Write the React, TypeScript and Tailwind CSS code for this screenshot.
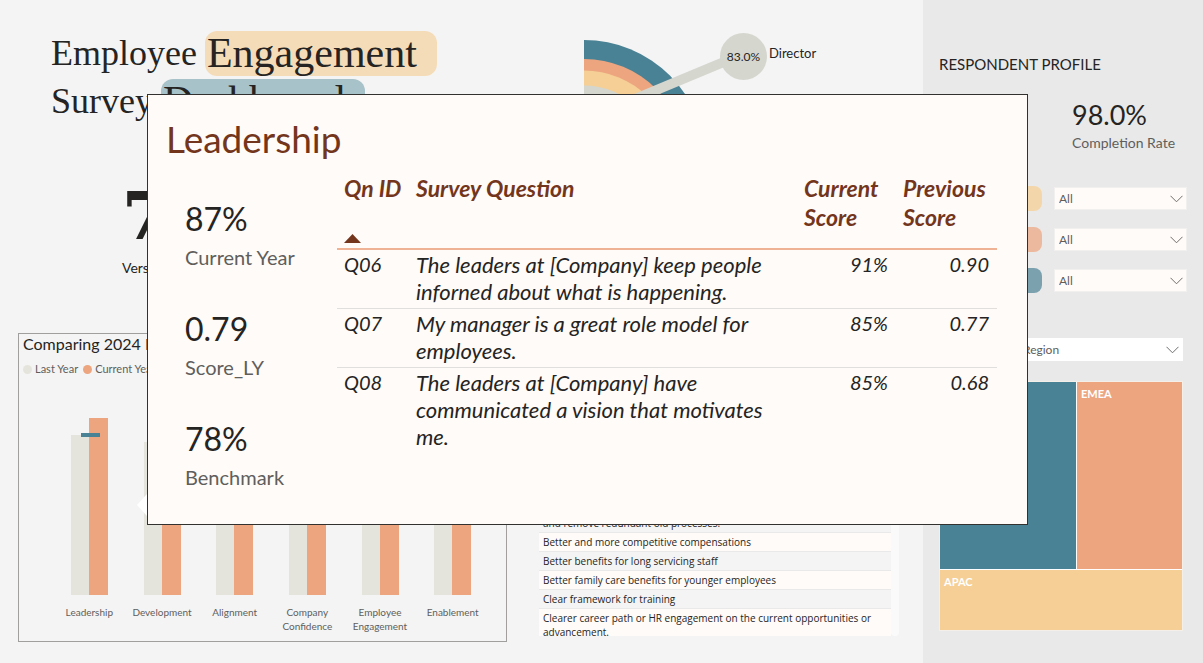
import type { ReactNode } from "react";

const scores = [
  { name: "Leadership", last: 160, current: 177, benchmark: 158 },
  { name: "Development", last: 153, current: 150 },
  { name: "Alignment", last: 150, current: 146 },
  { name: "Company Confidence", last: 148, current: 144 },
  { name: "Employee Engagement", last: 146, current: 142 },
  { name: "Enablement", last: 144, current: 140 },
];

const comments = [
  "and remove redundant old processes.",
  "Better and more competitive compensations",
  "Better benefits for long servicing staff",
  "Better family care benefits for younger employees",
  "Clear framework for training",
  "Clearer career path or HR engagement on the current opportunities or advancement.",
];

const questions = [
  { id: "Q06", text: "The leaders at [Company] keep people inforned about what is happening.", current: "91%", previous: "0.90" },
  { id: "Q07", text: "My manager is a great role model for employees.", current: "85%", previous: "0.77" },
  { id: "Q08", text: "The leaders at [Company] have communicated a vision that motivates me.", current: "85%", previous: "0.68" },
];

const metrics = [
  { value: "87%", label: "Current Year" },
  { value: "0.79", label: "Score_LY" },
  { value: "78%", label: "Benchmark" },
];

const filters = [
  { name: "Level", pill: "bg-[#f3d7ab]" },
  { name: "Gender", pill: "bg-[#ecb99f]" },
  { name: "Tenure", pill: "bg-[#7ba1af]" },
];

function Chevron() {
  return (
    <svg className="pointer-events-none absolute top-1/2 right-1 -mt-1" width="13" height="8" viewBox="0 0 13 8" fill="none" stroke="#6f6e6c" aria-hidden="true">
      <path d="M0.5 0.8 6.5 6.8 12.5 0.8" />
    </svg>
  );
}

function Slicer({ label, className, children }: { label: string; className: string; children: ReactNode }) {
  return (
    <div className="relative">
      <select aria-label={label} className={className}>
        {children}
      </select>
      <Chevron />
    </div>
  );
}

function ScoreChart() {
  return (
    <section className="mr-8 ml-[18px] h-[309px] border border-[#a19f9d] pl-1">
      <h2 className="text-[16px] leading-5">Comparing 2024 L</h2>
      <div className="mt-[5px] flex items-center gap-[3px] text-[11px] leading-5 text-[#605e5c]">
        <span className="size-[9px] rounded-full bg-[#e5e4dc]" />
        Last Year
        <span className="ml-0.5 size-[9px] rounded-full bg-[#eda57f]" />
        Current Year
      </div>
      <div className="mt-4 mr-[17px] ml-[30px] flex">
        {scores.map((s) => (
          <div key={s.name} className="flex flex-1 flex-col items-center">
            <div className="relative flex h-[200px] items-end">
              <div className="w-[18px] bg-[#e5e4dc]" style={{ height: s.last }} />
              <div className="w-[19px] bg-[#eda57f]" style={{ height: s.current }} />
              {s.benchmark && (
                <span className="absolute left-[10px] h-1 w-[19px] bg-[#4a8295]" style={{ bottom: s.benchmark }} />
              )}
            </div>
            <span className="mt-[10px] w-[70px] text-center text-[10px] leading-[14px] text-[#605e5c]">{s.name}</span>
          </div>
        ))}
      </div>
    </section>
  );
}

function Gauge() {
  return (
    <svg className="ml-[45px]" width="280" height="165" viewBox="584 0 280 165" role="img" aria-label="Director 83.0%">
      <path d="M584 40A121.500 121.500 0 0 1 705.500 161.500H584Z" fill="#4a8295" />
      <path d="M584 59A102.500 102.500 0 0 1 686.500 161.500H584Z" fill="#eda57f" />
      <path d="M584 70.500A91 91 0 0 1 675 161.500H584Z" fill="#f5cf95" />
      <path d="M584 85.500A76 76 0 0 1 660 161.500H584Z" fill="#d5d6ce" />
      <path d="M743 54 600 113.500" stroke="#d5d6ce" strokeWidth="10" />
      <circle cx="743.500" cy="56.500" r="23.500" fill="#d5d6ce" />
      <text x="743.500" y="61" textAnchor="middle" fontSize="12" fill="#252423">83.0%</text>
      <text x="769" y="58" fontSize="13" fill="#252423">Director</text>
    </svg>
  );
}

function Popup() {
  return (
    <div role="dialog" aria-label="Leadership" className="absolute top-[94px] left-[147px] flex h-[431px] w-[881px] border border-[#333130] bg-[#fffbf8]">
      <svg className="absolute top-[399px] -left-[11px]" width="10" height="22" viewBox="0 0 10 22" aria-hidden="true">
        <path d="M10 0 0 11 10 22Z" fill="#fff" />
      </svg>
      <div className="w-[189px] pt-6">
        <h2 className="pl-[18px] text-[37px] leading-10 text-[#73361c]">Leadership</h2>
        <dl className="flex flex-col pt-[37px] pl-[37px]">
          {metrics.map((m) => (
            <div key={m.label} className="flex h-[110px] flex-col-reverse justify-end">
              <dt className="text-[20px] leading-[30px] text-[#605e5c]">{m.label}</dt>
              <dd className="text-[32px] leading-[46px]">{m.value}</dd>
            </div>
          ))}
        </dl>
      </div>
      <div className="flex-1 pt-[79px] pr-[30px]">
        <table className="w-full table-fixed border-collapse text-left italic">
          <colgroup>
            <col className="w-[72px]" />
            <col />
            <col className="w-[99px]" />
            <col className="w-[101px]" />
          </colgroup>
          <thead className="align-top text-[23px] leading-[29px] text-[#73361c]">
            <tr className="h-[75px] border-b-2 border-[#f0b295]">
              <th scope="col" className="pl-[7px] whitespace-nowrap">
                Qn ID
                <svg className="mt-[31px]" width="17" height="9" viewBox="0 0 17 9" aria-label="Sorted ascending">
                  <path d="M0 9 8.500 0 17 9Z" fill="#73361c" />
                </svg>
              </th>
              <th scope="col" className="pl-[7px]">Survey Question</th>
              <th scope="col" className="pl-[7px]">Current Score</th>
              <th scope="col" className="pl-[7px]">Previous Score</th>
            </tr>
          </thead>
          <tbody className="align-top text-[20px] leading-[27px]">
            {questions.map((q) => (
              <tr key={q.id} className="border-b border-[#e1dfdd] last:border-b-0">
                <td className="pt-px pb-[3px] pl-[7px]">{q.id}</td>
                <td className="pt-px pr-6 pb-[3px] pl-[7px] text-[22px]">{q.text}</td>
                <td className="pt-px pr-2 pb-[3px] text-right">{q.current}</td>
                <td className="pt-px pr-2 pb-[3px] text-right">{q.previous}</td>
              </tr>
            ))}
          </tbody>
        </table>
      </div>
    </div>
  );
}

export default function App() {
  return (
    <div className="relative flex min-h-screen bg-[#f4f4f4] font-['Lato','Liberation_Sans',sans-serif] text-[#252423]">
      <main className="flex flex-1">
        <div className="flex w-[539px] flex-col">
          <h1 className="flex h-[138px] flex-col gap-[3px] pt-[31px] pl-[51px] font-['Liberation_Serif',serif] text-[36px] leading-[45px]">
            <span className="flex gap-2">
              Employee
              <mark className="rounded-xl bg-[#f5dcb8] pr-5 pl-0.5 text-[42px] text-inherit">Engagement</mark>
            </span>
            <span className="flex gap-2">
              Survey
              <mark className="rounded-xl bg-[#a8c2c9] pr-5 pl-0.5 text-[42px] text-inherit">Dashboard</mark>
            </span>
          </h1>
          <div className="h-[195px] pt-10 pl-[122px]">
            <p className="font-['DejaVu_Serif',serif] text-[66px] leading-[76px] font-bold">7</p>
            <p className="text-[14px] leading-7">Versus</p>
          </div>
          <ScoreChart />
        </div>
        <div className="flex flex-1 flex-col justify-between pr-[23px]">
          <Gauge />
          <div className="mb-[27px] flex h-[118px] items-end overflow-hidden">
            <table className="-mb-[5px] w-[352px] text-left font-['Open_Sans',sans-serif] text-[10px] leading-[14px]">
              <tbody>
                {comments.map((c) => (
                  <tr key={c} className="border-b border-[#e9e9e9] last:border-0 even:bg-[#fffbf8]">
                    <td className="px-1 pt-0.5 pb-0.5">{c}</td>
                  </tr>
                ))}
              </tbody>
            </table>
            <div className="h-full w-2 rounded-b bg-[#fafafa]" />
          </div>
        </div>
      </main>
      <aside className="w-[280px] bg-[#e9e9e9] pt-[53px] pr-4 pl-4">
        <h2 className="text-[15px] leading-[22px]">RESPONDENT PROFILE</h2>
        <div className="pt-6 pl-[133px]">
          <p className="text-[27px] leading-8">98.0%</p>
          <p className="text-[14px] leading-6 text-[#605e5c]">Completion Rate</p>
        </div>
        <div className="flex flex-col gap-4 pt-[31px]">
          {filters.map((f) => (
            <div key={f.name} className="flex items-center gap-3">
              <span className={"h-[25px] w-[103px] rounded-lg " + f.pill} />
              <div className="flex-1">
                <Slicer label={f.name} className="block h-[23px] w-full appearance-none border border-[#f2f0ee] bg-[#fffbf8] pl-1 text-[12px] text-[#605e5c]">
                  <option>All</option>
                </Slicer>
              </div>
            </div>
          ))}
        </div>
        <div className="pt-[45px] pr-1">
          <Slicer label="Region" className="block h-[23px] w-full appearance-none bg-white pl-[84px] text-[12px] text-[#605e5c]">
            <option>Region</option>
          </Slicer>
        </div>
        <div className="mt-5 mr-1 grid h-[250px] grid-cols-[136px_1fr] grid-rows-[187px_1fr] gap-px border border-[#f4efe9] bg-white text-[11px] font-bold text-white">
          <div className="bg-[#4a8295]" />
          <div className="bg-[#eda57f] px-1 py-1">EMEA</div>
          <div className="col-span-2 bg-[#f5cf95] px-1 py-1">APAC</div>
        </div>
      </aside>
      <Popup />
    </div>
  );
}
